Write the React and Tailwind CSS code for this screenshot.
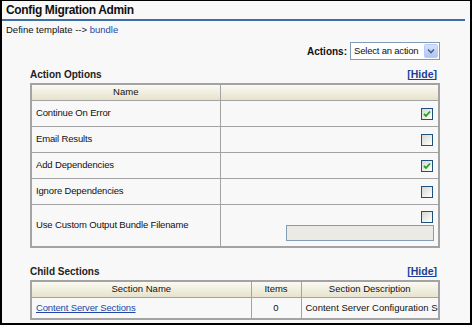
import React from 'react';

const font = { fontFamily: '"Liberation Sans", Arial, sans-serif' };

function Check({ checked }) {
    return (
        <span className="inline-flex w-[12px] h-[12px] border border-[#1c5180] bg-gradient-to-br from-[#d8d8d0] to-white items-center justify-center">
            {checked && (
                <svg width="8" height="8" viewBox="0 0 8 8">
                    <path d="M1 4 L3 6 L7 1.5" stroke="#21a121" strokeWidth="1.8" fill="none" />
                </svg>
            )}
        </span>
    );
}

function Header({ children, className = '' }) {
    return (
        <th className={`h-[16px] p-0 font-normal text-center text-[9.5px] text-[#111] border border-[#a3a3a3] bg-gradient-to-b from-[#fbfaf2] to-[#e6e2cc] ${className}`}>
            {children}
        </th>
    );
}

const options = [
    { name: 'Continue On Error', checked: true },
    { name: 'Email Results', checked: false },
    { name: 'Add Dependencies', checked: true },
    { name: 'Ignore Dependencies', checked: false },
];

export default function App() {
    return (
        <div style={font} className="w-[472px] h-[325px] overflow-hidden bg-[#f8f8f8] border-t border-l-2 border-r-2 border-b-2 border-black text-[#111]">
            <div className="h-[20px] mr-[5px] border-b-2 border-[#3d6eaa] pl-[4px] pt-[1px] text-[12px] font-bold tracking-[-0.35px] leading-[17px]">
                Config Migration Admin
            </div>
            <div className="mt-[2px] pl-[4px] text-[9.5px] leading-[13px]">
                Define template --&gt; <span className="text-[#2346a6]">bundle</span>
            </div>

            <div className="ml-[28px] w-[410px]">
                <div className="mt-[6px] h-[18px] flex justify-end items-center gap-[3px]">
                    <span className="text-[10px] font-bold">Actions:</span>
                    <div className="w-[90px] h-[18px] border border-[#7f9db9] bg-white flex items-center justify-between pl-[3px] pr-[1px]">
                        <span className="text-[9.5px] tracking-[-0.2px]">Select an action</span>
                        <span className="w-[14px] h-[14px] rounded-[2px] bg-gradient-to-b from-[#d5e2fc] to-[#aec5f7] border border-[#b7cbf5] flex items-center justify-center">
                            <svg width="8" height="6" viewBox="0 0 8 6">
                                <path d="M1 1.5 L4 4.5 L7 1.5" stroke="#4d6185" strokeWidth="1.6" fill="none" />
                            </svg>
                        </span>
                    </div>
                </div>

                <div className="mt-[8px] h-[13px] flex justify-between items-center pr-[3px]">
                    <span className="text-[10px] font-bold text-[#222]">Action Options</span>
                    <span className="text-[10.5px] font-bold text-[#1d3e96] underline">[Hide]</span>
                </div>
                <table className="mt-[2px] w-[410px] border-collapse border-2 border-[#a3a3a3] table-fixed">
                    <thead>
                        <tr>
                            <Header className="w-[189px]">Name</Header>
                            <Header />
                        </tr>
                    </thead>
                    <tbody>
                        {options.map((o) => (
                            <tr key={o.name} className="h-[26px]">
                                <td className="border border-[#a3a3a3] pl-[4px] text-[9.5px] tracking-[-0.15px]">{o.name}</td>
                                <td className="border border-[#a3a3a3] pr-[5px] text-right align-middle">
                                    <span className="inline-flex align-middle"><Check checked={o.checked} /></span>
                                </td>
                            </tr>
                        ))}
                        <tr className="h-[43px]">
                            <td className="border border-[#a3a3a3] pl-[4px] text-[9.5px] tracking-[-0.15px]">Use Custom Output Bundle Filename</td>
                            <td className="border border-[#a3a3a3] pr-[4px] align-top pt-[6px]">
                                <div className="flex flex-col items-end gap-[2px]">
                                    <span className="mr-[1px] flex"><Check checked={false} /></span>
                                    <div className="w-[148px] h-[16px] border border-[#7f9db9] bg-[#ebeae4]" />
                                </div>
                            </td>
                        </tr>
                    </tbody>
                </table>

                <div className="mt-[17px] h-[13px] flex justify-between items-center pr-[3px]">
                    <span className="text-[10px] font-bold text-[#222]">Child Sections</span>
                    <span className="text-[10.5px] font-bold text-[#1d3e96] underline">[Hide]</span>
                </div>
                <table className="mt-[2px] w-[410px] border-collapse border-2 border-[#a3a3a3] table-fixed">
                    <thead>
                        <tr>
                            <Header className="w-[220px]">Section Name</Header>
                            <Header className="w-[50px]">Items</Header>
                            <Header>Section Description</Header>
                        </tr>
                    </thead>
                    <tbody>
                        <tr className="h-[22px]">
                            <td className="border border-[#a3a3a3] pl-[4px] text-[9.5px] tracking-[-0.15px]">
                                <span className="text-[#2346a6] underline">Content Server Sections</span>
                            </td>
                            <td className="border border-[#a3a3a3] text-center text-[9.5px]">0</td>
                            <td className="border border-[#a3a3a3] pl-[4px] text-[9.5px] whitespace-nowrap overflow-hidden">Content Server Configuration Sections</td>
                        </tr>
                    </tbody>
                </table>
            </div>
        </div>
    );
}
